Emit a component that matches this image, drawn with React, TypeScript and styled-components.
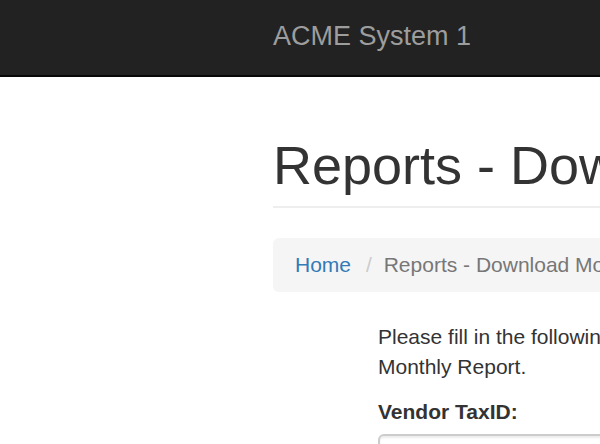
import React from "react";
import styled, { createGlobalStyle } from "styled-components";

const Global = createGlobalStyle`
  html, body { margin: 0; padding: 0; background: #fff; }
  body {
    font-family: "Liberation Sans", Arial, Helvetica, sans-serif;
    font-size: 21px;
    line-height: 30px;
    color: #333;
    overflow: hidden;
  }
  * { box-sizing: border-box; }
`;

const Navbar = styled.nav`
  height: 77px;
  background: #222;
  border-bottom: 2px solid #080808;
  display: flex;
  align-items: center;
  padding-left: 273px;
`;

const Brand = styled.a`
  font-size: 27px;
  line-height: 30px;
  color: #9d9d9d;
  text-decoration: none;
  margin-top: -3px;
`;

const Container = styled.main`
  padding-left: 273px;
  padding-top: 59px;
`;

const PageHeader = styled.div`
  border-bottom: 2px solid #eee;
  padding-bottom: 11px;
  margin-bottom: 30px;
`;

const Title = styled.h1`
  margin: 0;
  font-size: 54px;
  line-height: 59px;
  font-weight: 500;
  white-space: nowrap;
  color: #333;
`;

const Breadcrumb = styled.ol`
  list-style: none;
  margin: 0 0 30px;
  padding: 12px 22px;
  height: 54px;
  background: #f5f5f5;
  border-radius: 6px 0 0 6px;
  display: flex;
  white-space: nowrap;
`;

const Crumb = styled.li<{ $active?: boolean }>`
  color: ${(p) => (p.$active ? "#777" : "#337ab7")};
  &:not(:first-child)::before {
    content: "/\\00a0";
    padding: 0 6px 0 15px;
    color: #ccc;
  }
`;

const CrumbLink = styled.a`
  color: #337ab7;
  text-decoration: none;
`;

const Form = styled.form`
  margin-left: 105px;
`;

const Intro = styled.p`
  margin: 0 0 15px;
  width: 560px;
`;

const Label = styled.label`
  display: block;
  font-weight: 700;
  margin-bottom: 7px;
`;

const Input = styled.input`
  display: block;
  width: 400px;
  height: 51px;
  border: 2px solid #ccc;
  border-radius: 6px;
  box-shadow: inset 0 2px 2px rgba(0, 0, 0, 0.075);
  font: inherit;
  padding: 9px 18px;
`;

export default function App() {
  return (
    <>
      <Global />
      <Navbar>
        <Brand href="#">ACME System 1</Brand>
      </Navbar>
      <Container>
        <PageHeader>
          <Title>Reports - Download Monthly Report</Title>
        </PageHeader>
        <Breadcrumb>
          <Crumb>
            <CrumbLink href="#">Home</CrumbLink>
          </Crumb>
          <Crumb $active>Reports - Download Monthly Report</Crumb>
        </Breadcrumb>
        <Form>
          <Intro>
            Please fill in the following information to download the
            Monthly Report.
          </Intro>
          <Label>Vendor TaxID:</Label>
          <Input type="text" />
        </Form>
      </Container>
    </>
  );
}
